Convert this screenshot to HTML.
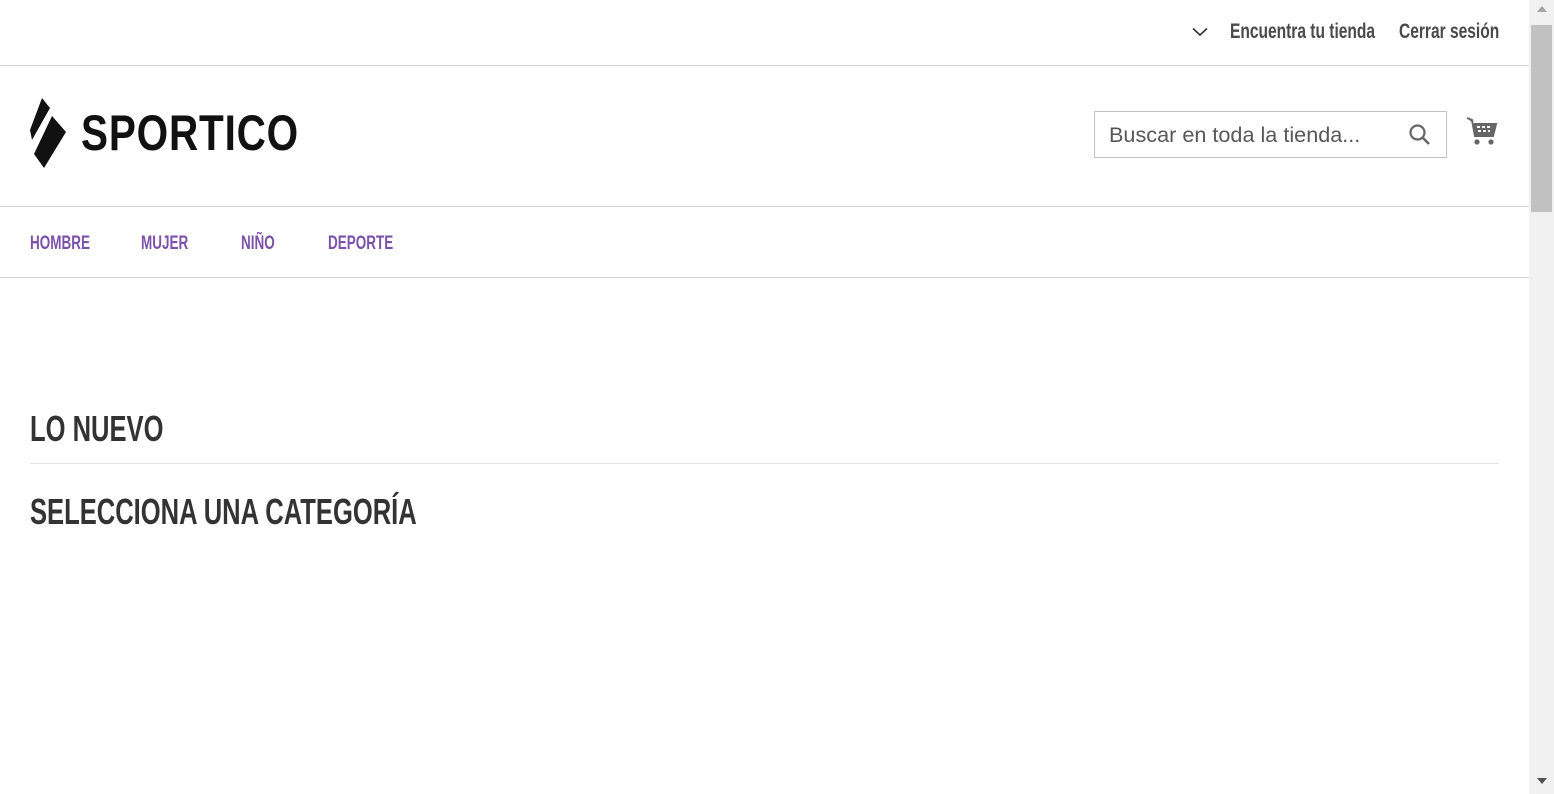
<!DOCTYPE html>
<html><head><meta charset="utf-8"><style>
*{margin:0;padding:0;box-sizing:border-box}
body{width:1554px;height:794px;overflow:hidden;background:#fff;font-family:"Liberation Sans",sans-serif;position:relative}
.s{position:absolute;white-space:nowrap;transform-origin:0 0}
.line{position:absolute;left:0;width:1529px;height:1px;background:#d1d1d1}
</style></head><body>
<div class="line" style="top:65px"></div>
<div class="line" style="top:206px"></div>
<div class="line" style="top:277px"></div>
<div style="position:absolute;left:30px;top:463px;width:1469px;height:1px;background:#e3e3e3"></div>

<svg style="position:absolute;left:1192px;top:27px" width="16" height="10"><path d="M1 1.5 L8 8 L15 1.5" fill="none" stroke="#333" stroke-width="1.6"/></svg>
<div class="s" style="left:1230px;top:20px;font-size:21px;font-weight:bold;color:#4a4a4a;transform:scaleX(0.74)">Encuentra tu tienda</div>
<div class="s" style="left:1399px;top:20px;font-size:21px;font-weight:bold;color:#4a4a4a;transform:scaleX(0.74)">Cerrar sesión</div>

<svg style="position:absolute;left:28px;top:96px" width="42" height="74"><polygon points="14,2 22,12 4,44 2,34" fill="#111"/><polygon points="24,20 38,36 16,72 6,58" fill="#111"/></svg>
<div class="s" style="left:81px;top:104px;font-size:50px;font-weight:bold;color:#111;transform:scaleX(0.81);letter-spacing:1px">SPORTICO</div>

<div style="position:absolute;left:1094px;top:111px;width:353px;height:47px;border:1px solid #c2c2c2"></div>
<div class="s" style="left:1109px;top:124px;font-size:21px;color:#575757;transform:scaleX(1.03)">Buscar en toda la tienda...</div>
<svg style="position:absolute;left:1408px;top:123px" width="24" height="24"><circle cx="9.5" cy="9.5" r="7" fill="none" stroke="#666" stroke-width="2.2"/><line x1="14.5" y1="14.5" x2="21" y2="21" stroke="#666" stroke-width="2.6"/></svg>
<svg style="position:absolute;left:1466px;top:116px" width="32" height="32"><path d="M1 2 L6 4 L9 20 L27 20 L30 8 L8 8" fill="#666" stroke="#666" stroke-width="2"/><g fill="#fff"><rect x="11" y="10" width="3" height="2"/><rect x="16" y="10" width="3" height="2"/><rect x="21" y="10" width="3" height="2"/><rect x="12" y="14" width="3" height="2"/><rect x="17" y="14" width="3" height="2"/><rect x="22" y="14" width="2" height="2"/></g><circle cx="11" cy="26" r="2.6" fill="#666"/><circle cx="25" cy="26" r="2.6" fill="#666"/></svg>

<div class="s" style="left:30px;top:233px;font-size:19px;font-weight:bold;color:#7b52ab;transform:scaleX(0.71)">HOMBRE</div>
<div class="s" style="left:141px;top:233px;font-size:19px;font-weight:bold;color:#7b52ab;transform:scaleX(0.71)">MUJER</div>
<div class="s" style="left:241px;top:233px;font-size:19px;font-weight:bold;color:#7b52ab;transform:scaleX(0.71)">NIÑO</div>
<div class="s" style="left:328px;top:233px;font-size:19px;font-weight:bold;color:#7b52ab;transform:scaleX(0.71)">DEPORTE</div>

<div class="s" style="left:30px;top:408px;font-size:36px;font-weight:bold;color:#333;transform:scaleX(0.71)">LO NUEVO</div>
<div class="s" style="left:30px;top:491px;font-size:36px;font-weight:bold;color:#333;transform:scaleX(0.71)">SELECCIONA UNA CATEGORÍA</div>

<div style="position:absolute;left:1529px;top:0;width:25px;height:794px;background:#f1f1f1"></div>
<div style="position:absolute;left:1531px;top:25px;width:21px;height:187px;background:#c1c1c1"></div>
<svg style="position:absolute;left:1536px;top:4px" width="12" height="10"><polygon points="1,8 6,2 11,8" fill="#a3a3a3"/></svg>
<svg style="position:absolute;left:1536px;top:776px" width="12" height="10"><polygon points="1,2 6,8 11,2" fill="#505050"/></svg>
</body></html>
